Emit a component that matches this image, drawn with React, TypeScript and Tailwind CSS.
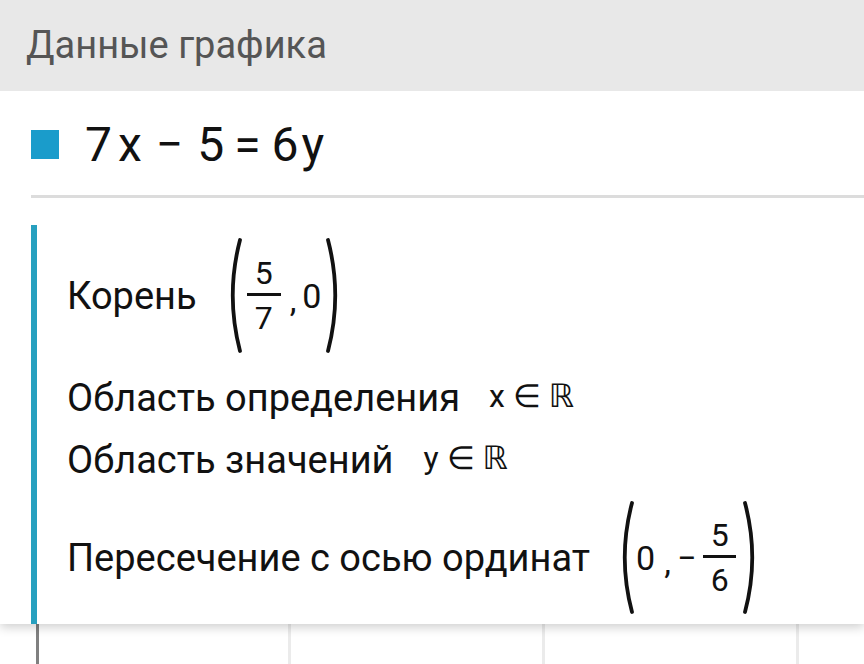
import React from 'react';

const Paren = ({ side, height }: { side: 'left' | 'right'; height: number }) => {
  const w = 18;
  const d =
    side === 'left'
      ? `M15 2 Q 0.5 ${height / 2} 15 ${height - 2}`
      : `M3 2 Q 17.5 ${height / 2} 3 ${height - 2}`;
  return (
    <svg width={w} height={height} viewBox={`0 0 ${w} ${height}`} className="shrink-0">
      <path d={d} fill="none" stroke="#111" strokeWidth={3.8} strokeLinecap="round" />
    </svg>
  );
};

const Frac = ({ num, den, width }: { num: string; den: string; width: number }) => (
  <div className="flex flex-col items-center text-[32px] leading-none" style={{ width }}>
    <span className="pb-[4px]">{num}</span>
    <span className="h-[3px] w-full bg-[#111]" />
    <span className="pt-[6px]">{den}</span>
  </div>
);

const Row = ({ label, children, className }: { label: string; children: React.ReactNode; className: string }) => (
  <div className={`flex items-center ${className}`}>
    <span className="text-[38px] leading-none">{label}</span>
    {children}
  </div>
);

export default function App() {
  return (
    <div
      className="w-[864px] h-[664px] overflow-hidden bg-white flex flex-col text-[#111]"
      style={{ fontFamily: 'Roboto, "Noto Sans", sans-serif' }}
    >
      <div className="relative z-10 bg-white shadow-[0_3px_10px_rgba(0,0,0,0.2)] flex flex-col">
        <div className="h-[91px] bg-[#e8e8e8] flex items-center pl-[26px] text-[38px] text-[#555]">
          Данные графика
        </div>

        <div className="h-[104px] flex items-center pl-[31px] pt-[2px]">
          <span className="w-[28px] h-[29px] bg-[#1a9ccb]" />
          <div className="flex items-baseline text-[48px] leading-none ml-[26px] pt-[2px]">
            <span>7</span>
            <span className="ml-[6px]">x</span>
            <span className="ml-[14px]">−</span>
            <span className="ml-[14px]">5</span>
            <span className="ml-[10px]">=</span>
            <span className="ml-[11px]">6</span>
            <span className="ml-[3px]">y</span>
          </div>
        </div>

        <div className="ml-[31px] h-[3px] bg-[#dcdcdc]" />

        <div className="ml-[31px] mt-[27px] border-l-[6px] border-[#27a0bf] pl-[30px] pt-[13px] pb-[10px] flex flex-col">
          <Row label="Корень" className="h-[115px]">
            <div className="flex items-center ml-[28px]">
              <Paren side="left" height={115} />
              <div className="ml-[4px]">
                <Frac num="5" den="7" width={34} />
              </div>
              <span className="text-[34px] leading-none ml-[9px] mt-[8px]">,</span>
              <span className="text-[34px] leading-none ml-[6px]">0</span>
              <div className="ml-[4px]">
                <Paren side="right" height={115} />
              </div>
            </div>
          </Row>

          <Row label="Область определения" className="h-[45px] mt-[22px]">
            <span className="text-[32px] leading-none ml-[29px] pb-[4px]">
              x ∈ <span style={{ fontFamily: '"DejaVu Sans", sans-serif' }}>ℝ</span>
            </span>
          </Row>

          <Row label="Область значений" className="h-[45px] mt-[17px]">
            <span className="text-[32px] leading-none ml-[30px] pb-[4px]">
              y ∈ <span style={{ fontFamily: '"DejaVu Sans", sans-serif' }}>ℝ</span>
            </span>
          </Row>

          <Row label="Пересечение с осью ординат" className="h-[113px] mt-[19px]">
            <div className="flex items-center ml-[27px]">
              <Paren side="left" height={113} />
              <span className="text-[34px] leading-none ml-[1px]">0</span>
              <span className="text-[34px] leading-none ml-[9px] mt-[8px]">,</span>
              <span className="text-[34px] leading-none ml-[6px]">−</span>
              <div className="ml-[7px]">
                <Frac num="5" den="6" width={33} />
              </div>
              <div className="ml-[6px]">
                <Paren side="right" height={113} />
              </div>
            </div>
          </Row>
        </div>
      </div>

      <div className="flex-1 bg-white">
        <svg width="864" height="40" className="block">
          <rect x="288" y="0" width="3" height="40" fill="#ebebeb" />
          <rect x="542" y="0" width="3" height="40" fill="#ebebeb" />
          <rect x="796" y="0" width="3" height="40" fill="#ebebeb" />
          <rect x="36" y="0" width="3" height="40" fill="#808080" />
        </svg>
      </div>
    </div>
  );
}
